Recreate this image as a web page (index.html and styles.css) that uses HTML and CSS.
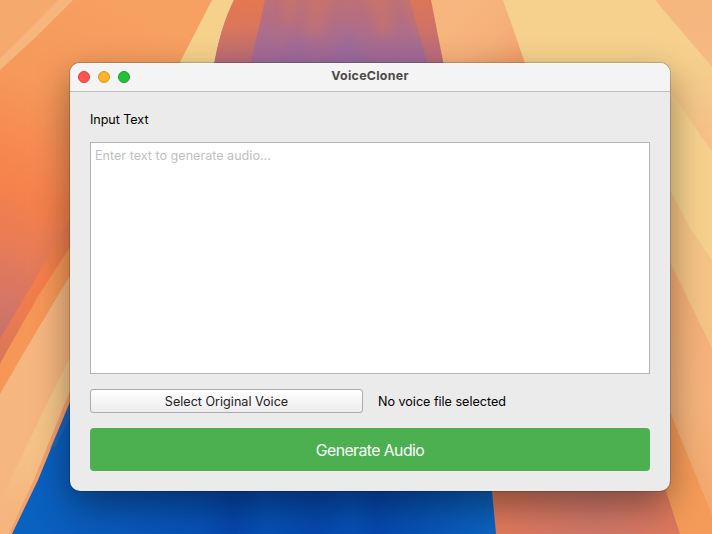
FILE: index.html
```html
<!DOCTYPE html>
<html lang="en">
<head>
<meta charset="utf-8">
<title>VoiceCloner</title>
<link rel="stylesheet" href="styles.css">
</head>
<body>
<svg class="wallpaper" viewBox="0 0 712 534" aria-hidden="true">
  <defs>
    <linearGradient id="ember" gradientUnits="userSpaceOnUse" x1="150" y1="20" x2="0" y2="335">
      <stop offset="0" stop-color="#f6a062"/><stop offset=".3" stop-color="#f6995a"/><stop offset=".6" stop-color="#f6814b"/><stop offset=".75" stop-color="#e87c56"/><stop offset="1" stop-color="#c9716f"/>
    </linearGradient>
    <linearGradient id="flare" gradientUnits="userSpaceOnUse" x1="55" y1="220" x2="0" y2="360">
      <stop offset="0" stop-color="#e97e4f"/><stop offset=".4" stop-color="#f67f4a"/><stop offset="1" stop-color="#dc7659"/>
    </linearGradient>
    <linearGradient id="dune" gradientUnits="userSpaceOnUse" x1="0" y1="400" x2="0" y2="520">
      <stop offset="0" stop-color="#f5c68a"/><stop offset=".5" stop-color="#f5c085"/><stop offset="1" stop-color="#f6b47e"/>
    </linearGradient>
    <linearGradient id="plum" x1="0" y1="0" x2="0" y2="1">
      <stop offset="0" stop-color="#bd7078"/><stop offset=".35" stop-color="#b26e85"/><stop offset="1" stop-color="#9a69a0"/>
    </linearGradient>
    <linearGradient id="plumEdge" gradientUnits="userSpaceOnUse" x1="235" y1="0" x2="240" y2="66">
      <stop offset="0" stop-color="#e5784f"/><stop offset=".4" stop-color="#da765b"/><stop offset="1" stop-color="#b56a7b"/>
    </linearGradient>
    <linearGradient id="plumRight" x1="0" y1="0" x2="0" y2="1">
      <stop offset="0" stop-color="#dc755a"/><stop offset="1" stop-color="#b56b80"/>
    </linearGradient>
    <linearGradient id="peach" gradientUnits="userSpaceOnUse" x1="465" y1="10" x2="515" y2="66">
      <stop offset="0" stop-color="#f6b67d"/><stop offset=".5" stop-color="#f5b079"/><stop offset="1" stop-color="#f2a06b"/>
    </linearGradient>
    <linearGradient id="sea" gradientUnits="userSpaceOnUse" x1="20" y1="0" x2="496" y2="0">
      <stop offset="0" stop-color="#0a62c0"/><stop offset=".2" stop-color="#0959bb"/><stop offset=".38" stop-color="#0750b5"/><stop offset=".45" stop-color="#0546ac"/><stop offset=".52" stop-color="#0650b4"/><stop offset=".62" stop-color="#0548ae"/><stop offset=".7" stop-color="#074fb4"/><stop offset=".75" stop-color="#0548ae"/><stop offset="1" stop-color="#0b64bf"/>
    </linearGradient>
    <linearGradient id="rose" gradientUnits="userSpaceOnUse" x1="492" y1="0" x2="680" y2="0">
      <stop offset="0" stop-color="#e0795b"/><stop offset=".55" stop-color="#cf7769"/><stop offset="1" stop-color="#dd785c"/>
    </linearGradient>
    <linearGradient id="sunset" gradientUnits="userSpaceOnUse" x1="712" y1="320" x2="690" y2="534">
      <stop offset="0" stop-color="#f5b179"/><stop offset=".4" stop-color="#f5b47c"/><stop offset="1" stop-color="#f4a467"/>
    </linearGradient>
    <linearGradient id="sand" gradientUnits="userSpaceOnUse" x1="690" y1="20" x2="690" y2="110">
      <stop offset="0" stop-color="#f6b77f"/><stop offset=".6" stop-color="#f6ba83"/><stop offset="1" stop-color="#f5be84"/>
    </linearGradient>
    <linearGradient id="haze" gradientUnits="userSpaceOnUse" x1="680" y1="60" x2="705" y2="140">
      <stop offset="0" stop-color="#f6d08c"/><stop offset="1" stop-color="#f5c187"/>
    </linearGradient>
  </defs>
  <path fill="url(#ember)" d="M0 0H300V400H0z"/>
  <path fill="#f6a96d" d="M0 0H58L0 58z"/>
  <path fill="#f6b57d" d="M58 0H73L36 37L0 70V58z"/>
  <path fill="url(#flare)" d="M100 176L63 230L33 283L0 339V400H100z"/>
  <path fill="#f69757" d="M100 203L70 247L37 298L2 360L0 364V420H100z"/>
  <path fill="#f6b680" d="M100 229L70 276L57 297L23 354L0 394V534H100z"/>
  <path fill="url(#dune)" d="M100 300L68 361L0 501V534H30L100 390z"/>
  <path fill="#f4a069" d="M100 325L67 398L35 477L9 534H15L80 410z"/>
  <path fill="url(#sea)" d="M100 340L70 402L38 480L12 534H500V340z"/>
  <path fill="#2a65b2" opacity=".6" d="M72 398V414L56 446L50 449z"/>
  <path fill="#f6d18c" d="M212 0H237L222 36L214 66H178z"/>
  <path fill="url(#plum)" d="M234 0H432L445 70H213Q220 28 234 0z"/>
  <path fill="url(#plumEdge)" d="M234 0H265L250 66H214Q220 28 234 0z"/>
  <path fill="url(#plumRight)" d="M410 0H432L445 66H428z"/>
  <g class="folds">
    <path fill="#df7656" opacity=".3" d="M285 -10H300L292 25H284zM308 -10H335L322 35H304zM365 -10H390L395 35H375zM398 -10H430L437 35H415z"/>
    <path fill="#886ab0" opacity=".25" d="M298 35H304L302 70H285zM342 30H352L365 70H330z"/>
  </g>
  <path fill="url(#peach)" d="M431 0H505L527 66H444z"/>
  <path fill="#f6d18d" d="M503 0H712V300H600L525 63z"/>
  <path fill="url(#haze)" d="M655 0L712 67V152L670 91L640 40z"/>
  <path fill="url(#sand)" d="M655 0L712 67V0z"/>
  <path fill="#f5c485" d="M650 151L690 228L712 260V350H650z"/>
  <path fill="url(#sunset)" d="M650 224L670 262L712 348V534H650z"/>
  <path fill="#f59b59" d="M650 365L670 412L712 515V534H650z"/>
  <path fill="url(#rose)" d="M490 470H659L680 534H496z"/>
</svg>
<main class="window">
  <header class="titlebar">
    <div class="controls"><i class="close"></i><i class="minimize"></i><i class="zoom"></i></div>
    <h1>VoiceCloner</h1>
  </header>
  <section class="content">
    <label for="text">Input Text</label>
    <textarea id="text" placeholder="Enter text to generate audio..."></textarea>
    <div class="voice">
      <button class="select"><span>Select Original Voice</span></button>
      <span class="status">No voice file selected</span>
    </div>
    <button class="generate"><span>Generate Audio</span></button>
  </section>
</main>
</body>
</html>
```
FILE: styles.css
```css
* { box-sizing: border-box; }
body {
  margin: 0;
  width: 712px;
  height: 534px;
  padding: 63px 42px 43px 70px;
  overflow: hidden;
  font: 12.6px/16px Inter, "Liberation Sans", sans-serif;
  color: #000;
}
.wallpaper {
  position: absolute;
  inset: 0;
  width: 712px;
  height: 534px;
  z-index: -1;
}
.folds { filter: blur(5px); }
.window {
  width: 600px;
  height: 428px;
  display: flex;
  flex-direction: column;
  border-radius: 10px;
  background: #ebebeb;
  box-shadow: 0 0 0 1px rgba(0,0,0,.16), 0 14px 36px rgba(0,0,0,.4);
}
.titlebar {
  flex: 0 0 29px;
  display: grid;
  grid-template-columns: 80px 1fr 80px;
  border-bottom: 1px solid #bdbdbd;
  border-radius: 10px 10px 0 0;
  background: #f4f4f4;
  box-shadow: inset 0 1px #fbfbfb;
}
.controls { display: flex; gap: 8px; padding: 8px; }
.controls i { width: 12px; height: 12px; border-radius: 50%; border: 1px solid; }
.close { background: #ff5450; border-color: #e23c39 !important; }
.minimize { background: #ffb429; border-color: #df961b !important; }
.zoom { background: #24c138; border-color: #15a326 !important; }
h1 {
  margin: 0;
  padding-top: 5px;
  text-align: center;
  font-size: 12.4px;
  line-height: 16px;
  font-weight: 700;
  letter-spacing: .28px;
  color: #4b4b4b;
}
.content {
  flex: 1;
  display: flex;
  flex-direction: column;
  padding: 20px;
}
label { height: 16px; margin-bottom: 14px; letter-spacing: -.06px; }
textarea {
  flex: 0 0 232px;
  width: 100%;
  padding: 5px 4px;
  border: 1px solid #b4b4b4;
  border-radius: 0;
  outline: 0;
  resize: none;
  background: #fff;
  font: inherit;
}
textarea::placeholder { color: #bfbfbf; opacity: 1; }
.voice { display: flex; align-items: center; gap: 15px; height: 24px; margin: 15px 0; }
.status { padding-top: 2px; letter-spacing: -.02px; }
button { font: inherit; padding: 0; }
.select {
  width: 273px;
  height: 24px;
  padding-top: 2px;
  border: 1px solid #acacac;
  border-radius: 3px;
  background: linear-gradient(#fff, #ececec);
  color: #222;
}
.generate {
  height: 43px;
  padding-top: 2px;
  border: 0;
  border-radius: 4px;
  background: #4caf50;
  color: #fff;
  font-size: 15.8px;
  line-height: 20px;
  letter-spacing: -.56px;
}
```
